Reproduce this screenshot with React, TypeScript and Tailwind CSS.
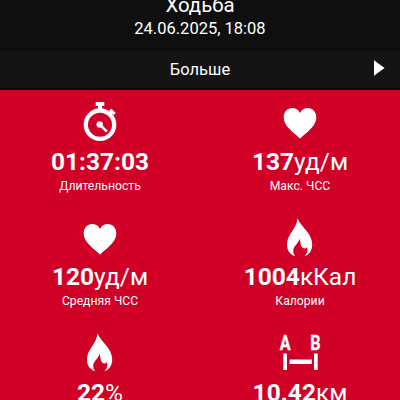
import type { ReactNode } from 'react';

function Icon({ children }: { children: ReactNode }) {
  return (
    <svg viewBox="0 0 44 52" className="h-[52px] w-11 shrink-0" fill="white">
      {children}
    </svg>
  );
}

function Stopwatch() {
  return (
    <Icon>
      <circle cx="22" cy="34.7" r="14.2" fill="none" stroke="white" strokeWidth="4.3" />
      <path d="M17.7 12h8.600v4h-2.300v4h-4v-4h-2.300z" />
      <path d="M31 25l3.300-3.300M32.200 19.600l4.600 4.400" stroke="white" strokeWidth="3" />
      <circle cx="21.700" cy="34.500" r="3.200" />
      <path d="M21.700 34.500l7.200 7.200" stroke="white" strokeWidth="2.600" />
    </Icon>
  );
}

function Heart() {
  return (
    <Icon>
      <path d="M22 48.8C20 46 15 43 10.500 38C7 34 5.700 31 5.700 27.200C5.700 22 9.500 18.100 14.200 18.100C17.500 18.100 20.500 19.800 22 23C23.500 19.800 26.500 18.100 29.800 18.100C34.500 18.100 38.300 22 38.300 27.200C38.300 31 37 34 33.500 38C29 43 24 46 22 48.800Z" />
    </Icon>
  );
}

function Flame() {
  return (
    <Icon>
      <path d="M19.500 12.200C22.500 20.500 34.200 27 34.200 38.500C34.200 44.500 31.500 48.400 26.500 50.200C28.900 47.800 30.200 44.500 28.900 41.200C27.700 42.500 26.800 42.600 25.500 42.300C22.200 41.300 22.900 36.500 21.500 32.800C20.500 37.800 15.800 39.700 15.300 44.100C15 46.600 15.600 48.500 17.200 50.200C11.800 48.200 9 44.600 9 38.400C9 28 18.500 23.500 19.500 12.200Z" />
    </Icon>
  );
}

function Distance() {
  return (
    <Icon>
      <g fontFamily="Roboto, sans-serif" fontWeight="700" fontSize="19.500" textAnchor="middle" stroke="white" strokeWidth="0.300">
        <text transform="translate(7.2 28.600) scale(0.83 1)">A</text>
        <text transform="translate(37.500 28.600) scale(0.83 1)">B</text>
      </g>
      <path d="M5.300 32.500h3.700v16.600h-3.700zM36 32.500h3.700v16.600h-3.700zM11.600 38.600h22.200v4.500h-22.200z" />
    </Icon>
  );
}

type Stat = { icon: ReactNode; value: string; unit?: string; label?: string };

const stats: Stat[] = [
  { icon: <Stopwatch />, value: '01:37:03', label: 'Длительность' },
  { icon: <Heart />, value: '137', unit: 'уд/м', label: 'Макс. ЧСС' },
  { icon: <Heart />, value: '120', unit: 'уд/м', label: 'Средняя ЧСС' },
  { icon: <Flame />, value: '1004', unit: 'кКал', label: 'Калории' },
  { icon: <Flame />, value: '22', unit: '%' },
  { icon: <Distance />, value: '10.42', unit: 'км' },
];

export default function App() {
  return (
    <div className="flex h-[400px] w-[400px] flex-col overflow-hidden bg-[#d00026] font-['Roboto',sans-serif] text-white">
      <header className="flex h-[51px] shrink-0 flex-col items-center bg-[#0f0f0f]">
        <h1 className="-mt-[7px] h-6 text-[20.4px] leading-6">Ходьба</h1>
        <p className="mt-[2px] text-[16.5px] leading-5">24.06.2025, 18:08</p>
      </header>
      <button className="grid h-[39px] shrink-0 grid-cols-[1fr_auto_1fr] items-center border-b-2 border-[#0c0909] bg-[#141414]">
        <span className="col-start-2 text-[16.5px] leading-5">Больше</span>
        <svg viewBox="0 0 12 16" className="mr-[15px] -mt-[3px] h-4 w-3 justify-self-end" fill="white">
          <path d="M1 0.300L11.600 8L1 15.700z" />
        </svg>
      </button>
      <main className="grid shrink-0 grid-cols-2">
        {stats.map((s, i) => (
          <section key={i} className="flex h-[115.5px] flex-col items-center whitespace-nowrap">
            {s.icon}
            <p className="mt-[5.9px] text-[24.5px] leading-7">
              <span className="font-bold">{s.value}</span>
              {s.unit}
            </p>
            {s.label && <p className="mt-[2px] text-[12.2px] leading-4">{s.label}</p>}
          </section>
        ))}
      </main>
    </div>
  );
}
